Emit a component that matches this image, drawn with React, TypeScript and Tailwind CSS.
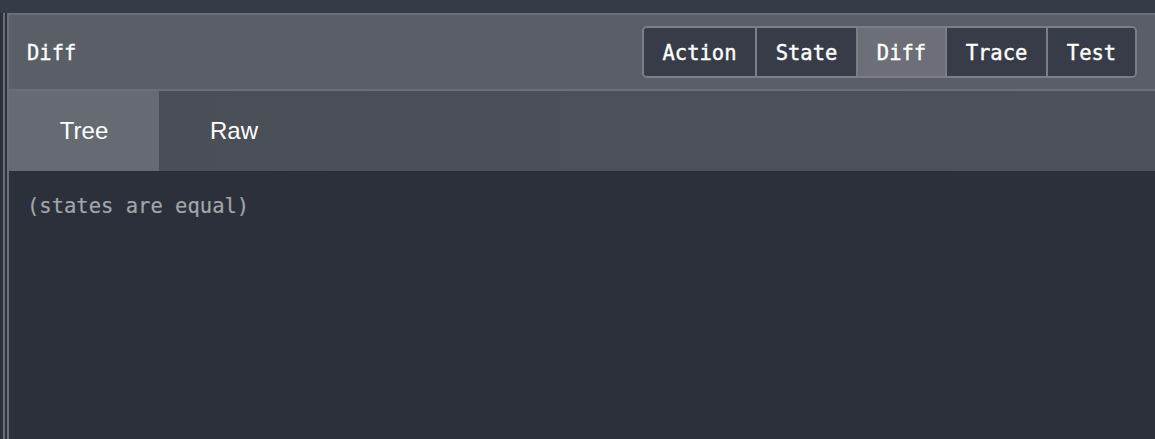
import { useState } from 'react'

const tabs = ['Action', 'State', 'Diff', 'Trace', 'Test']
const widths: Record<string, string> = {
  Action: 'w-[111px]',
  State: 'w-[101px] border-l-2',
  Diff: 'w-[89px] border-l-2',
  Trace: 'w-[101px] border-l-2',
  Test: 'w-[89px] border-l-2',
}

export default function App() {
  const [active, setActive] = useState('Diff')
  const [view, setView] = useState('Tree')

  return (
    <div className="w-[1155px] h-[439px] overflow-hidden bg-[#2c303b] flex flex-col">
      {/* top strip */}
      <div className="h-[13px] bg-[#363b48] shrink-0" />

      <div className="flex flex-1 min-h-0">
        {/* left edge of the split pane */}
        <div className="w-[9px] shrink-0 flex bg-[#2c303b]">
          <div className="w-[3px]" />
          <div className="w-[2px] bg-[#6c6f78]" />
          <div className="w-[2px]" />
          <div className="w-[2px] bg-[#6c6f78]" />
        </div>

        <div className="flex-1 flex flex-col min-w-0">
          {/* Header */}
          <header className="h-[78px] shrink-0 bg-[#5a5e67] border-t-2 border-b-2 border-[#6b6f78] flex items-center justify-between pl-[18px] pr-[18px]">
            <h1 className="pt-[3px] font-['DejaVu_Sans_Mono',monospace] text-[20.5px] text-white [-webkit-text-stroke:0.3px_white]">
              {active}
            </h1>
            <div className="flex h-[52px] rounded-[5px] border-2 border-[#7b7e86] overflow-hidden">
              {tabs.map((t) => (
                <button
                  key={t}
                  onClick={() => setActive(t)}
                  className={`${widths[t]} h-full pt-[2px] border-[#7b7e86] font-['DejaVu_Sans_Mono',monospace] text-[20.5px] text-white [-webkit-text-stroke:0.4px_white] flex items-center justify-center ${
                    active === t ? 'bg-[#6c6f77]' : 'bg-[#383c48]'
                  }`}
                >
                  {t}
                </button>
              ))}
            </div>
          </header>

          {/* Tree / Raw */}
          <div className="h-[80px] shrink-0 flex bg-gradient-to-r from-[#4a4e57] to-[#4d5159]">
            {['Tree', 'Raw'].map((v) => (
              <button
                key={v}
                onClick={() => setView(v)}
                className={`w-[150px] h-full flex items-center justify-center font-['Liberation_Sans',Arial,sans-serif] text-[24px] text-white ${
                  view === v ? 'bg-[#666a72]' : ''
                }`}
              >
                {v}
              </button>
            ))}
          </div>

          {/* Body */}
          <main className="flex-1 bg-[#2c303b] pl-[18px] pt-[23px]">
            <p className="font-['DejaVu_Sans_Mono',monospace] text-[20.5px] leading-6 text-[#a3a6ab] [-webkit-text-stroke:0.2px_#a3a6ab]">
              (states are equal)
            </p>
          </main>
        </div>
      </div>
    </div>
  )
}
